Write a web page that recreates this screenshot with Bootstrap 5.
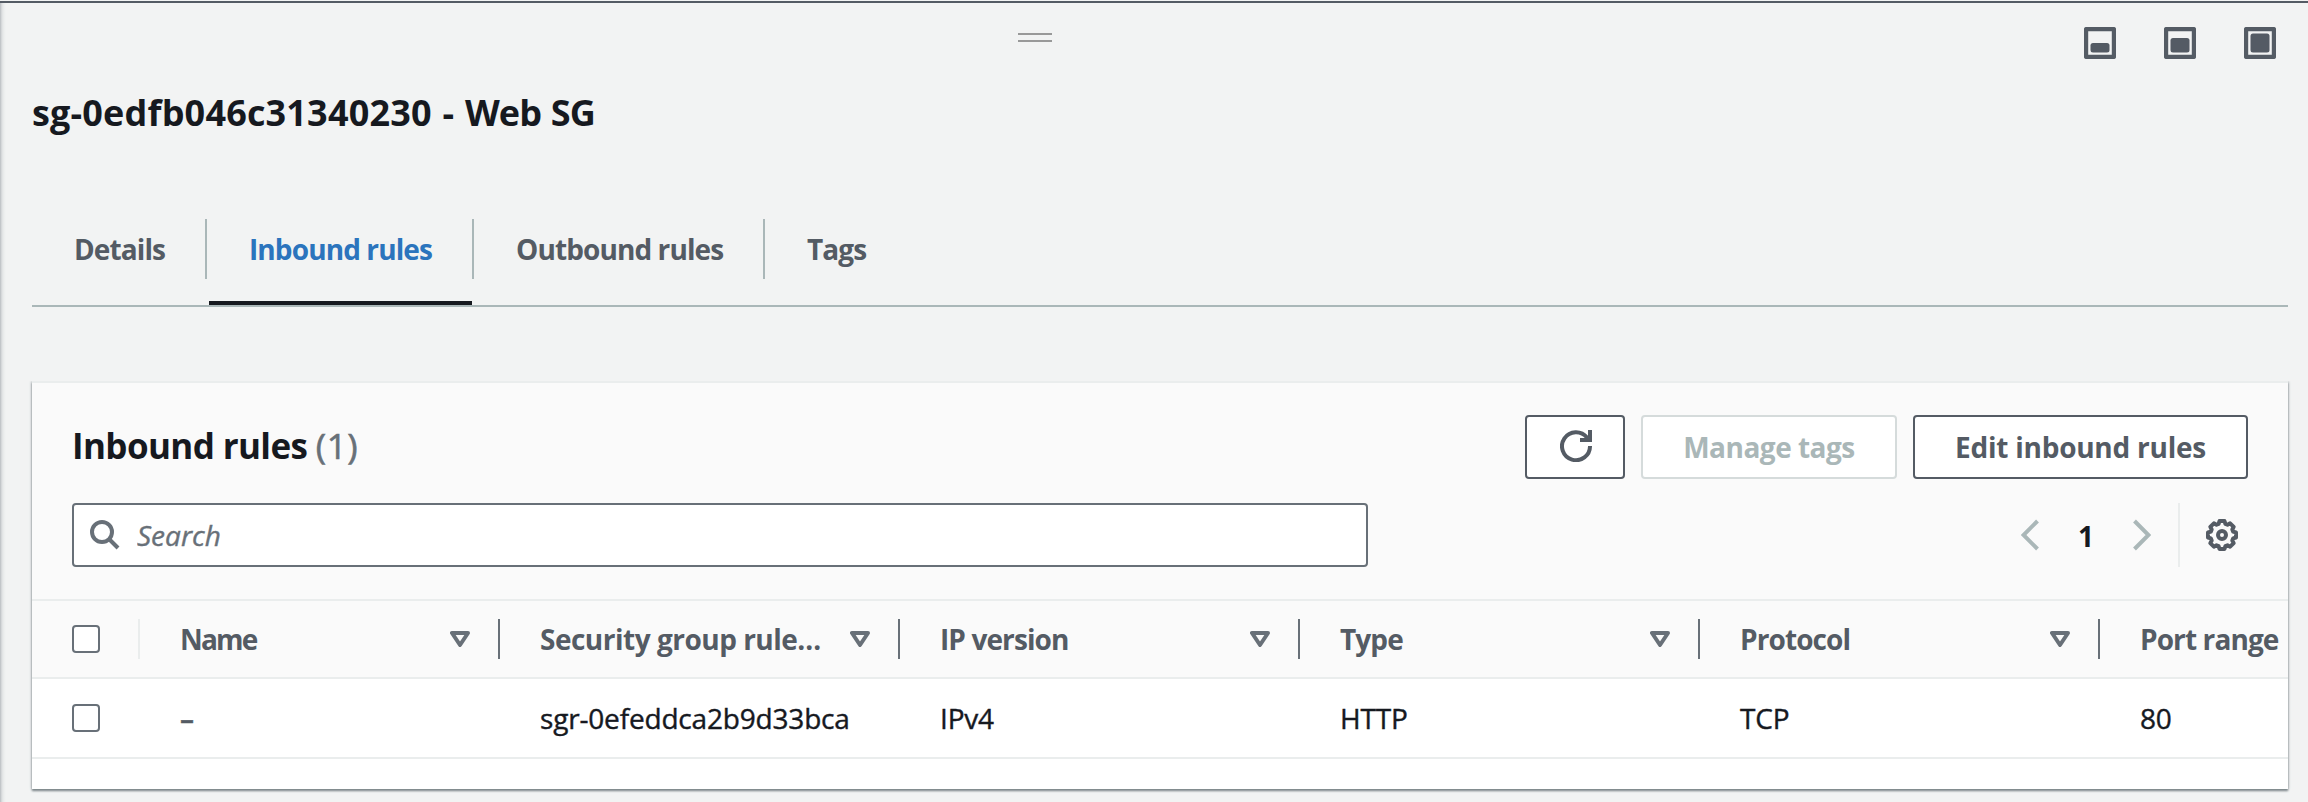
<!DOCTYPE html>
<html lang="en">
<head>
<meta charset="utf-8">
<title>sg-0edfb046c31340230 - Web SG</title>
<link href="https://cdn.jsdelivr.net/npm/bootstrap@5.3.0/dist/css/bootstrap.min.css" rel="stylesheet">
<style>
body{background:#f2f3f3;color:#16191f;font-family:"Open Sans","Noto Sans",sans-serif;font-size:28px;line-height:40px;height:802px;overflow:hidden}
svg{display:block;flex:none}
.split-panel{height:801px;margin-top:1px;border-top:2px solid #545b64;padding:0 20px 0 32px;background:linear-gradient(90deg,#b9bdc1 0,#dfe1e2 2px,#eceeee 4px,#f2f3f3 6px)}
.panel-top{height:78px}
.grip{width:34px;height:9px;border:solid #999;border-width:2px 0;margin:30px 0 0 986px}
.size-btns{gap:48px;margin:24px 12px 0 0;color:#545b64}
.panel-title{font-size:36px;line-height:48px;font-weight:700;letter-spacing:.18px;word-spacing:1.2px;margin:8px 0 0}
.panel-title span{letter-spacing:-.9px}
.panel-tabs{height:88px;margin-top:82px;border-bottom:2px solid #aab7b8;flex-wrap:nowrap}
.panel-tabs .nav-link{height:86px;padding:10px 0 0 42px;color:#545b64;font-weight:700;letter-spacing:-.9px;position:relative;border-radius:0;white-space:nowrap;line-height:40px}
.panel-tabs .nav-item:not(:last-child) .nav-link::after{content:"";position:absolute;right:0;top:0;width:2px;height:60px;background:#aab7b8}
.panel-tabs .nav-link.active{color:#2b74bd}
.panel-tabs .nav-link.active::before{content:"";position:absolute;left:2px;right:2px;bottom:0;height:4px;background:#16191f}
.rules-card{height:408px;margin-top:74px;border:0;border-top:2px solid #eaeded;border-radius:0;box-shadow:0 2px 2px 0 #7d868a,0 0 3px 0 #a5abb0;clip-path:inset(0 -6px -8px -6px);overflow:visible;background:#fff;color:#16191f}
.rules-head{height:218px;background:#fafafa;border-bottom:2px solid #eaeded;padding:32px 40px 0}
.rules-head h2{font-size:35px;line-height:48px;font-weight:700;letter-spacing:-.62px;margin:7px 0 0}
.rules-head h2 span{font-weight:400;-webkit-text-stroke:.6px #687078;color:#687078;letter-spacing:.6px}
.aws-btn{height:64px;border:2px solid #545b64;border-radius:4px;background:#fff!important;color:#545b64;font-size:28px;line-height:40px;font-weight:700;padding:10px 0;white-space:nowrap}
.aws-btn:disabled{opacity:1;border-color:#d5dbdb;color:#aab7b8}
.w-refresh{width:100px}.w-manage{width:256px;letter-spacing:-.5px}.w-edit{width:335px;letter-spacing:-.25px}
.find-box{width:1296px;height:64px;border:2px solid #687078;border-radius:4px;background:#fff;padding:0 0 0 16px}
.find-box input{font-size:28px;line-height:40px;font-style:italic;-webkit-text-stroke:.4px #687078;letter-spacing:0;border:0;padding:0;margin-left:17px;background:none;box-shadow:none!important;color:#687078}
.find-box input::placeholder{color:#687078;opacity:1}
.pager{height:64px;padding-right:10px}
.page-no{font-weight:700;width:94px;text-align:center;line-height:40px;padding-top:1px}
.pager-rule{width:2px;height:64px;background:#eaeded;margin:0 26px 0 27px}
.rules-table{table-layout:fixed;width:2256px;border-collapse:separate;border-spacing:0;margin:0}
.table-clip{overflow:hidden}
.rules-table th,.rules-table td{height:80px;padding:0 0 0 40px;border-bottom:2px solid #eaeded;white-space:nowrap;vertical-align:middle;color:#16191f;letter-spacing:-.18px}
.rules-table td{-webkit-text-stroke:.4px currentColor}
.rules-table th{height:78px;background:#fafafa;color:#545b64;font-weight:700;letter-spacing:-.9px;position:relative}
.rules-table th.th-name{letter-spacing:-1.8px}
.rules-table th.th-rule{letter-spacing:-.5px}
.rules-table th:not(:last-child)::after{content:"";position:absolute;right:0;top:18px;width:2px;height:40px;background:#687078}
.rules-table th:first-child::after{background:#eaeded}
.rules-table .sorter{padding-right:30px;height:40px}
.rules-table .form-check-input{display:block;width:28px;height:28px;margin:0;border:2px solid #687078;border-radius:4px;background:#fff}
.rules-table .dash{color:#545b64;font-weight:600}
</style>
</head>
<body>
<svg width="0" height="0" class="position-absolute">
<symbol id="tri" viewBox="0 0 20 16"><path d="M2 2h16l-8 12z" fill="none" stroke="#687078" stroke-width="4" stroke-linejoin="round"/></symbol>
</svg>
<main class="split-panel">
<div class="panel-top d-flex justify-content-between align-items-start">
<div class="grip"></div>
<div class="size-btns d-flex">
<svg width="32" height="32" viewBox="0 0 32 32"><rect x="2" y="2" width="28" height="28" rx="1" fill="none" stroke="currentColor" stroke-width="4.4"/><rect x="6.5" y="16" width="19" height="9.5" rx="2.5" fill="currentColor"/></svg>
<svg width="32" height="32" viewBox="0 0 32 32"><rect x="2" y="2" width="28" height="28" rx="1" fill="none" stroke="currentColor" stroke-width="4.4"/><rect x="6.5" y="11" width="19" height="14.5" rx="2.5" fill="currentColor"/></svg>
<svg width="32" height="32" viewBox="0 0 32 32"><rect x="2" y="2" width="28" height="28" rx="1" fill="none" stroke="currentColor" stroke-width="4.4"/><rect x="6.5" y="6.5" width="19" height="19" rx="2.5" fill="currentColor"/></svg>
</div>
</div>
<h1 class="panel-title">sg-0edfb046c31340230 - <span>Web SG</span></h1>
<ul class="nav panel-tabs">
<li class="nav-item" style="width:175px"><a class="nav-link" href="#">Details</a></li>
<li class="nav-item" style="width:267px"><a class="nav-link active" href="#">Inbound rules</a></li>
<li class="nav-item" style="width:291px"><a class="nav-link" href="#">Outbound rules</a></li>
<li class="nav-item"><a class="nav-link" href="#">Tags</a></li>
</ul>
<section class="card rules-card">
<div class="rules-head">
<div class="d-flex justify-content-between align-items-start">
<h2>Inbound rules <span>(1)</span></h2>
<div class="d-flex gap-3">
<button class="btn aws-btn w-refresh d-flex justify-content-center" aria-label="Refresh"><svg width="32" height="32" viewBox="0 0 32 32" style="margin:3px 0 0 2px" fill="none" stroke="#545b64" stroke-width="4"><path d="M30 16A14 14 0 1 1 27 7.500L29 10M30 0v10H20"/></svg></button>
<button class="btn aws-btn w-manage" disabled>Manage tags</button>
<button class="btn aws-btn w-edit">Edit inbound rules</button>
</div>
</div>
<div class="d-flex justify-content-between" style="margin-top:24px">
<div class="find-box d-flex align-items-center">
<svg width="30" height="30" viewBox="0 0 30 30" fill="none" stroke="#687078" stroke-width="4"><circle cx="12" cy="12" r="10"/><path d="M18.500 18.500L28 28"/></svg>
<input class="form-control" type="text" placeholder="Search">
</div>
<div class="pager d-flex align-items-center">
<svg width="18" height="32" viewBox="0 0 18 32" fill="none" stroke="#aab7b8" stroke-width="4"><path d="M16.500 2L2.500 16l14 14"/></svg>
<span class="page-no">1</span>
<svg width="18" height="32" viewBox="0 0 18 32" fill="none" stroke="#aab7b8" stroke-width="4"><path d="M1.500 2l14 14-14 14"/></svg>
<span class="pager-rule"></span>
<svg width="32" height="32" viewBox="-16 -16 32 32" fill="none" stroke="#545b64" stroke-width="4" stroke-linejoin="round"><circle r="4"/><path d="M-2.500-14h5L3.400-11.200 5.500-10.300 8.100-11.700 11.700-8.100 10.300-5.500 11.200-3.400 14-2.500v5L11.200 3.400 10.300 5.500 11.700 8.100 8.100 11.700 5.500 10.300 3.400 11.200 2.500 14h-5L-3.400 11.200-5.500 10.300-8.100 11.700-11.700 8.100-10.300 5.500-11.200 3.400-14 2.500v-5L-11.200-3.400-10.300-5.500-11.700-8.100-8.100-11.700-5.500-10.300-3.400-11.200z"/></svg>
</div>
</div>
</div>
<div class="table-clip">
<table class="table rules-table">
<colgroup><col style="width:108px"><col style="width:360px"><col style="width:400px"><col style="width:400px"><col style="width:400px"><col style="width:400px"><col style="width:188px"></colgroup>
<thead><tr>
<th><input class="form-check-input" type="checkbox" aria-label="Select all"></th>
<th class="th-name"><div class="sorter d-flex justify-content-between align-items-center">Name<svg width="20" height="16"><use href="#tri"/></svg></div></th>
<th class="th-rule"><div class="sorter d-flex justify-content-between align-items-center">Security group rule…<svg width="20" height="16"><use href="#tri"/></svg></div></th>
<th><div class="sorter d-flex justify-content-between align-items-center">IP version<svg width="20" height="16"><use href="#tri"/></svg></div></th>
<th><div class="sorter d-flex justify-content-between align-items-center">Type<svg width="20" height="16"><use href="#tri"/></svg></div></th>
<th><div class="sorter d-flex justify-content-between align-items-center">Protocol<svg width="20" height="16"><use href="#tri"/></svg></div></th>
<th>Port range</th>
</tr></thead>
<tbody><tr>
<td><input class="form-check-input" type="checkbox" aria-label="Select rule"></td>
<td class="dash">–</td><td>sgr-0efeddca2b9d33bca</td><td>IPv4</td><td>HTTP</td><td>TCP</td><td>80</td>
</tr></tbody>
</table>
</div>
</section>
</main>
<script src="https://cdn.jsdelivr.net/npm/bootstrap@5.3.0/dist/js/bootstrap.bundle.min.js"></script>
</body>
</html>
